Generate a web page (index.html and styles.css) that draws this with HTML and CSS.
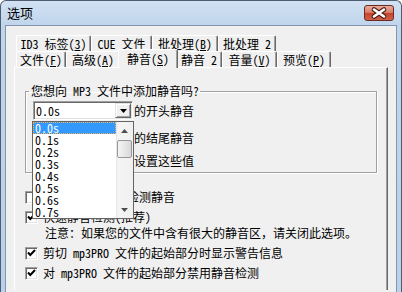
FILE: index.html
```html
<!DOCTYPE html>
<html lang="zh-CN">
<head>
<meta charset="utf-8">
<title>选项</title>
<link rel="stylesheet" href="styles.css">
</head>
<body>
<div class="window">
  <div class="titlebar">
    <span class="title">选项</span>
    <span class="close">
      <svg width="28" height="14" viewBox="0 0 28 14">
        <path d="M9 3.5 19 10.5M19 3.5 9 10.5" stroke="#4a1d15" stroke-width="4.6" stroke-linecap="round"/>
        <path d="M9 3.5 19 10.5M19 3.5 9 10.5" stroke="#fff" stroke-width="2.6" stroke-linecap="round"/>
      </svg>
    </span>
  </div>
  <div class="client">
    <div class="tabctl">
      <div class="tabrow">
        <span class="tab w75">ID3 标签(<u>3</u>)</span>
        <span class="tab w61">CUE 文件</span>
        <span class="tab w66">批处理(<u>B</u>)</span>
        <span class="tab w58">批处理 2</span>
      </div>
      <div class="tabrow">
        <span class="tab w50">文件(<u>F</u>)</span>
        <span class="tab w54">高级(<u>A</u>)</span>
        <span class="tab sel">静音(<u>S</u>)</span>
        <span class="tab w46">静音 2</span>
        <span class="tab w55">音量(<u>V</u>)</span>
        <span class="tab w54">预览(<u>P</u>)</span>
      </div>
      <div class="panel">
        <fieldset class="group">
          <legend>您想向 MP3 文件中添加静音吗?</legend>
          <div class="grow r1">
            <span class="combo"><span class="val">0.0s</span><span class="dbtn"><svg width="7" height="4" viewBox="0 0 7 4"><path d="M0 0h7L3.5 4z" fill="#000"/></svg></span></span>
            <span>的开头静音</span>
          </div>
          <div class="grow r2">
            <span class="combo"><span class="val"></span><span class="dbtn"><svg width="7" height="4" viewBox="0 0 7 4"><path d="M0 0h7L3.5 4z" fill="#000"/></svg></span></span>
            <span>的结尾静音</span>
          </div>
          <div class="grow r3">
            <span class="cell"></span>
            <span>设置这些值</span>
          </div>
        </fieldset>
        <div class="checks">
          <div class="chk c1"><span class="box"></span><span class="under">在开头或结尾处检测静音</span></div>
          <div class="chk c2"><span class="box"><svg width="11" height="11" viewBox="0 0 11 11"><path d="M2 4.5 4.3 7 9 2" stroke="#000" stroke-width="2" fill="none"/></svg></span><span class="under">快速静音检测(推荐)</span></div>
          <div class="note">注意：如果您的文件中含有很大的静音区，请关闭此选项。</div>
          <div class="chk c4"><span class="box"><svg width="11" height="11" viewBox="0 0 11 11"><path d="M2 4.5 4.3 7 9 2" stroke="#000" stroke-width="2" fill="none"/></svg></span><span>剪切 mp3PRO 文件的起始部分时显示警告信息</span></div>
          <div class="chk c5"><span class="box"><svg width="11" height="11" viewBox="0 0 11 11"><path d="M2 4.5 4.3 7 9 2" stroke="#000" stroke-width="2" fill="none"/></svg></span><span>对 mp3PRO 文件的起始部分禁用静音检测</span></div>
        </div>
        <div class="droplist">
          <ul class="items">
            <li class="hi">0.0s</li>
            <li>0.1s</li>
            <li>0.2s</li>
            <li>0.3s</li>
            <li>0.4s</li>
            <li>0.5s</li>
            <li>0.6s</li>
            <li>0.7s</li>
          </ul>
          <div class="vscroll">
            <span class="arrow"><svg width="7" height="4" viewBox="0 0 7 4"><path d="M3.5 0 7 4H0z" fill="#4f4f4f"/></svg></span>
            <span class="thumb"></span>
            <span class="track"></span>
            <span class="arrow"><svg width="7" height="4" viewBox="0 0 7 4"><path d="M0 0h7L3.5 4z" fill="#4f4f4f"/></svg></span>
          </div>
        </div>
      </div>
    </div>
  </div>
</div>
</body>
</html>
```

FILE: styles.css
```css
html, body {
  margin: 0;
  padding: 0;
}
body {
  width: 402px;
  height: 292px;
  overflow: hidden;
  background: #fff;
  font-family: "Noto Sans Mono CJK SC", "Noto Sans CJK SC", sans-serif;
  font-size: 12px;
  color: #000;
}
u {
  text-decoration: underline;
  text-underline-offset: 1px;
}
.window {
  box-sizing: border-box;
  width: 402px;
  height: 292px;
  border: 1px solid #4f5d70;
  border-bottom: none;
  border-radius: 6px 6px 0 0;
  background: linear-gradient(#d2e1f3, #c0d5ec 24px, #b9d1ea);
  padding: 0 4px;
  display: flex;
  flex-direction: column;
  overflow: hidden;
}
.titlebar {
  height: 24px;
  flex: none;
  display: flex;
  align-items: center;
  justify-content: space-between;
}
.title {
  padding-left: 2px;
  font-family: "Noto Sans CJK SC", sans-serif;
  font-size: 13px;
  line-height: 16px;
}
.close {
  align-self: flex-start;
  margin-top: 4px;
  margin-right: 3px;
  box-sizing: border-box;
  width: 30px;
  height: 16px;
  border: 1px solid #6b2a1f;
  border-radius: 3px;
  background: linear-gradient(#eaab9d, #d77a66 48%, #c4432c 52%, #d0624b);
  display: flex;
  align-items: center;
  justify-content: center;
}
.client {
  flex: 1;
  min-height: 0;
  border: 1px solid #8496ae;
  border-bottom: none;
  background: #f0f0f0;
  padding: 9px 8px 0;
  overflow: hidden;
}
.tabctl {
  display: flex;
  flex-direction: column;
}
.tabrow {
  height: 16px;
  display: flex;
  padding-left: 2px;
}
.tab {
  box-sizing: border-box;
  height: 16px;
  border-top: 1px solid #fff;
  border-left: 1px solid #fff;
  border-right: 1px solid #696969;
  box-shadow: inset -1px 0 0 #a0a0a0;
  border-radius: 2px 2px 0 0;
  text-align: center;
  line-height: 15px;
  white-space: nowrap;
  background: #f0f0f0;
}
.w75 { width: 75px; }
.w61 { width: 61px; }
.w66 { width: 66px; }
.w58 { width: 58px; }
.w50 { width: 50px; }
.w54 { width: 54px; }
.w46 { width: 46px; }
.w55 { width: 55px; }
.tab.sel {
  position: relative;
  z-index: 2;
  width: 60px;
  height: 19px;
  margin: -2px -2px 0;
  line-height: 17px;
}
.panel {
  position: relative;
  height: 223px;
  box-sizing: border-box;
  border-top: 1px solid #fff;
  border-left: 1px solid #fff;
  border-right: 1px solid #696969;
  box-shadow: inset -1px 0 0 #a0a0a0;
}
.group {
  margin: 16px 10px 0;
  padding: 3px 7px 4px;
  border: 1px solid #a0a0a0;
  box-shadow: 1px 1px 0 #fff, inset 1px 1px 0 #fff;
  min-width: 0;
}
.group legend {
  margin-left: -4px;
  padding: 0 1px 0 2px;
  line-height: 14px;
}
.grow {
  display: grid;
  grid-template-columns: 100px auto;
  column-gap: 1px;
  align-items: center;
}
.grow.r1 { height: 19px; }
.grow.r2 { height: 19px; margin-top: 8px; }
.grow.r3 { height: 14px; margin-top: 7px; line-height: 14px; }
.combo {
  box-sizing: border-box;
  height: 19px;
  display: flex;
  align-items: stretch;
  background: #fff;
  border: 1px solid;
  border-color: #a0a0a0 #fff #fff #a0a0a0;
  box-shadow: inset 1px 1px 0 #696969, inset -1px -1px 0 #e3e3e3;
  padding: 1px;
}
.combo .val {
  flex: 1;
  padding-left: 1px;
  line-height: 15px;
}
.dbtn {
  box-sizing: border-box;
  width: 16px;
  display: flex;
  align-items: center;
  justify-content: center;
  background: #f0f0f0;
  border: 1px solid;
  border-color: #e3e3e3 #696969 #696969 #e3e3e3;
  box-shadow: inset 1px 1px 0 #fff, inset -1px -1px 0 #a0a0a0;
}
.checks {
  margin-left: 10px;
  display: flex;
  flex-direction: column;
}
.chk {
  display: flex;
  align-items: center;
  height: 14px;
  line-height: 14px;
  white-space: nowrap;
}
.chk.c1 { margin-top: 17px; }
.chk.c2 { margin-top: 6px; }
.chk.c4 { margin-top: 6px; }
.chk.c5 { margin-top: 6px; }
.note {
  margin-top: 2px;
  margin-left: 20px;
  height: 14px;
  line-height: 14px;
  white-space: nowrap;
}
.box {
  box-sizing: border-box;
  width: 13px;
  height: 13px;
  margin-right: 5px;
  flex: none;
  background: #fff;
  border: 1px solid;
  border-color: #a0a0a0 #fff #fff #a0a0a0;
  box-shadow: inset 1px 1px 0 #696969, inset -1px -1px 0 #e3e3e3;
  display: flex;
  align-items: center;
  justify-content: center;
}
.droplist {
  position: absolute;
  left: 17px;
  top: 53px;
  z-index: 3;
  box-sizing: border-box;
  width: 102px;
  height: 98px;
  border: 1px solid #646464;
  background: #fff;
  display: flex;
}
.items {
  list-style: none;
  margin: 0;
  padding: 0;
  flex: 1;
}
.items li {
  height: 12px;
  line-height: 12px;
  padding-left: 2px;
}
.items li.hi {
  background: #3399ff;
  color: #fff;
  outline: 1px dotted #f3b35a;
  outline-offset: -1px;
}
.vscroll {
  width: 17px;
  display: flex;
  flex-direction: column;
  background: linear-gradient(to right, #e3e3e3, #f5f5f5 2px, #f0f0f0);
}
.arrow {
  height: 17px;
  flex: none;
  display: flex;
  align-items: center;
  justify-content: center;
}
.thumb {
  box-sizing: border-box;
  height: 18px;
  margin: 1px 1px 0;
  flex: none;
  border: 1px solid #979797;
  border-radius: 2px;
  background: linear-gradient(to right, #f4f4f4, #e6e6e6 55%, #d8d8d8);
}
.track {
  flex: 1;
}
```
